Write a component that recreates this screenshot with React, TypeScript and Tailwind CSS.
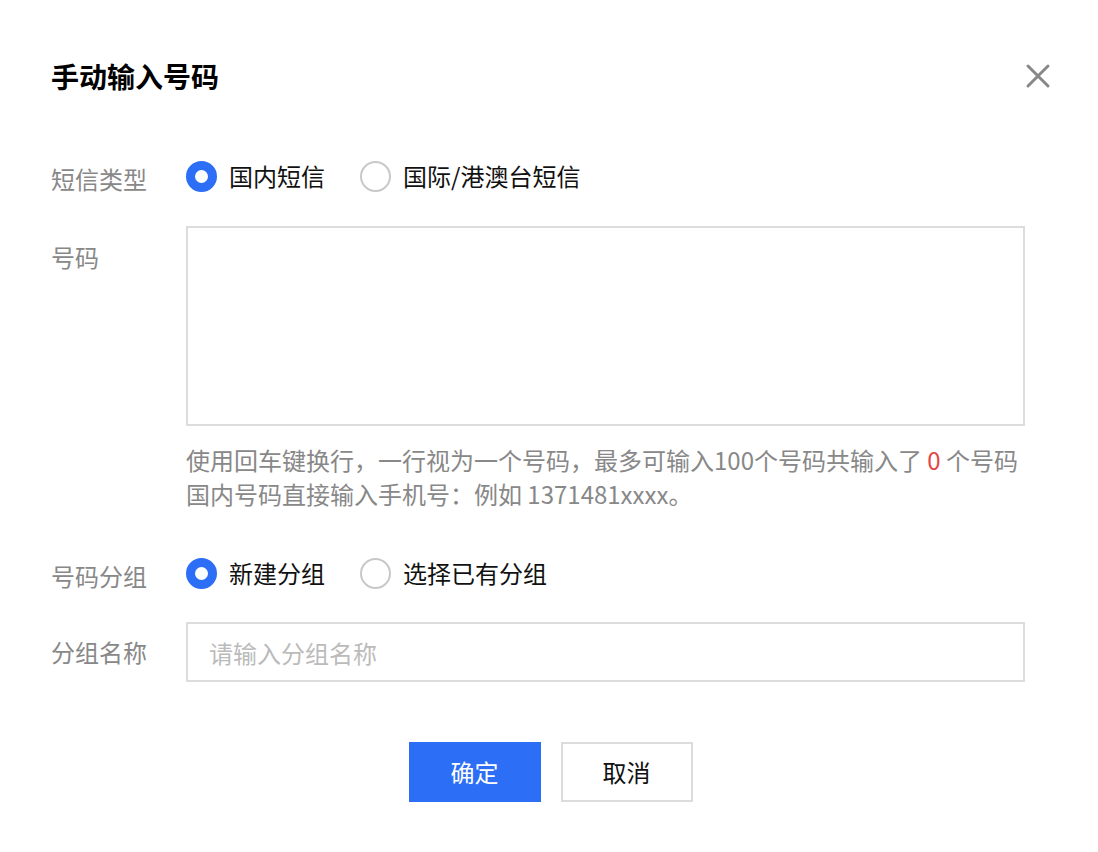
import React from 'react';

const font = { fontFamily: '"Noto Sans CJK SC", "Noto Sans", sans-serif' };

function Radio({ checked, label }: { checked?: boolean; label: string }) {
  return (
    <label className="flex items-center gap-[12px] cursor-pointer">
      {checked ? (
        <span className="w-[31px] h-[31px] rounded-full border-[9px] border-[#2d6ef6] bg-white box-border" />
      ) : (
        <span className="w-[31px] h-[31px] rounded-full border-2 border-[#c8c8c8] bg-white box-border" />
      )}
      <span className="text-[24px] leading-[36px] text-[#111]">{label}</span>
    </label>
  );
}

export default function App() {
  return (
    <div className="w-[1098px] h-[852px] bg-white pl-[51px] pr-[48px]" style={font}>
      {/* Header */}
      <div className="flex items-center justify-between pt-[56px] h-[96px]">
        <h1 className="text-[28px] leading-[40px] font-bold text-black">手动输入号码</h1>
        <button className="w-[30px] h-[30px] mr-[-3px] flex items-center justify-center text-[#888]">
          <svg width="26" height="26" viewBox="0 0 26 26" fill="none" stroke="currentColor" strokeWidth="3" strokeLinecap="round">
            <path d="M3 3L23 23M23 3L3 23" />
          </svg>
        </button>
      </div>

      {/* 短信类型 */}
      <div className="flex mt-[62px] h-[36px] items-center">
        <div className="w-[135px] text-[24px] leading-[36px] text-[#888] pt-[6px]">短信类型</div>
        <div className="flex items-center gap-[35px]">
          <Radio checked label="国内短信" />
          <Radio label="国际/港澳台短信" />
        </div>
      </div>

      {/* 号码 */}
      <div className="flex mt-[32px]">
        <div className="w-[135px] text-[24px] leading-[36px] text-[#888] pt-[13px]">号码</div>
        <div className="w-[839px]">
          <textarea className="block w-full h-[200px] border-2 border-[#dcdcdc] outline-none resize-none p-[12px] text-[24px]" />
          <div className="mt-[17px] text-[24px] leading-[34px] text-[#888] whitespace-nowrap">
            <div>
              使用回车键换行，一行视为一个号码，最多可输入100个号码共输入了 <span className="text-[#e54545]">0</span> 个号码
            </div>
            <div>国内号码直接输入手机号：例如 1371481xxxx。</div>
          </div>
        </div>
      </div>

      {/* 号码分组 */}
      <div className="flex mt-[44px] h-[36px] items-center">
        <div className="w-[135px] text-[24px] leading-[36px] text-[#888] pt-[6px]">号码分组</div>
        <div className="flex items-center gap-[35px]">
          <Radio checked label="新建分组" />
          <Radio label="选择已有分组" />
        </div>
      </div>

      {/* 分组名称 */}
      <div className="flex mt-[31px] items-center">
        <div className="w-[135px] text-[24px] leading-[36px] text-[#888]">分组名称</div>
        <input
          className="w-[839px] h-[60px] border-2 border-[#dcdcdc] outline-none px-[21px] text-[24px] placeholder:text-[#bbb]"
          placeholder="请输入分组名称"
        />
      </div>

      {/* Footer */}
      <div className="flex justify-center gap-[20px] mt-[60px]">
        <button className="w-[132px] h-[60px] bg-[#2d6ef6] text-white text-[24px]">确定</button>
        <button className="w-[132px] h-[60px] bg-white border-2 border-[#dcdcdc] text-[#111] text-[24px]">取消</button>
      </div>
    </div>
  );
}
